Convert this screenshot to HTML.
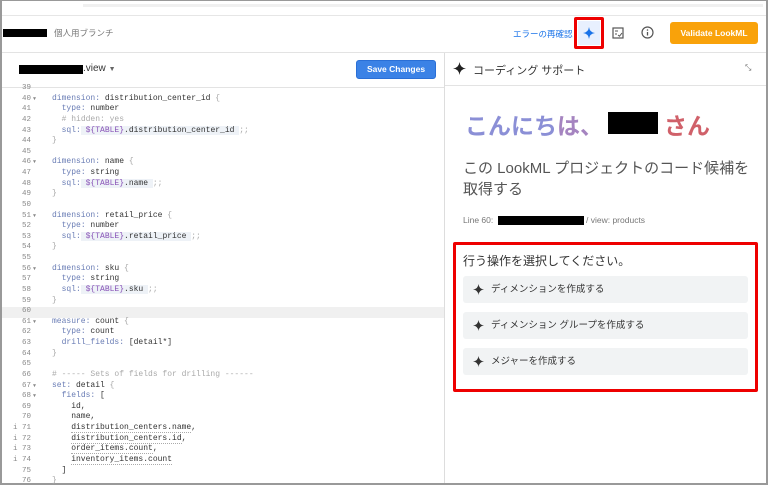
<!DOCTYPE html>
<html><head><meta charset="utf-8"><style>
*{margin:0;padding:0;box-sizing:border-box}
body{width:768px;height:485px;overflow:hidden;background:#fff;font-family:"Liberation Sans","Noto Sans CJK JP",sans-serif;position:relative}
.a{position:absolute}
.code{position:absolute;left:0;top:83px;width:444px;font-family:"Liberation Mono","DejaVu Sans Mono",monospace;font-size:8px;color:#333}
.ln{height:10.63px;line-height:10.63px;position:relative;white-space:pre}
.ln .n{position:absolute;left:0;width:31px;text-align:right;color:#888;font-size:7.5px}
.ln .f{position:absolute;left:33px;color:#888;font-size:5px}
.ln .t{position:absolute;left:52px}
.k{color:#6a7db5}.c{color:#aaa}.v{color:#8a55b8;background:#eef2f7}.s{background:#eef2f7}.u{border-bottom:1px dotted #aaa}
.btn{position:absolute;left:463px;width:285px;height:27px;background:#f1f3f4;border-radius:3px;font-size:9.5px;color:#333;line-height:27px;padding-left:28px}
.btn svg{position:absolute;left:10px;top:8px}
</style></head><body>
<div class="a" style="left:0;top:0;width:768px;height:485px;border:2px solid #999;border-top:1px solid #999"></div>
<div class="a" style="left:83px;top:4px;width:680px;height:3px;background:#f0f0f0"></div>
<div class="a" style="left:2px;top:15px;width:764px;height:1px;background:#e6e6e6"></div>
<div class="a" style="left:3px;top:29px;width:44px;height:8px;background:#000"></div>
<div class="a" style="left:54px;top:27px;font-size:8.5px;color:#777">個人用ブランチ</div>
<div class="a" style="left:513px;top:28px;font-size:8.5px;color:#1a73e8">エラーの再確認</div>
<div class="a" style="left:574px;top:17px;width:30px;height:32px;border:3px solid #e00;border-radius:2px"></div>
<div class="a" style="left:578px;top:21px;width:22px;height:24px;background:#e8f0fe"></div>
<svg class="a" style="left:583px;top:27px" width="12" height="12" viewBox="0 0 12 12"><path d="M6 0Q6.6 5.4 12 6Q6.6 6.6 6 12Q5.4 6.6 0 6Q5.4 5.4 6 0Z" fill="#1a73e8"/></svg>
<svg class="a" style="left:612px;top:27px" width="12" height="12" viewBox="0 0 12 12"><rect x="1" y="1" width="10" height="10" fill="none" stroke="#555" stroke-width="1.2"/><path d="M3 4h3M3 7h2M6 8l1.5 1.2L10 6" stroke="#555" fill="none"/></svg>
<svg class="a" style="left:641px;top:26px" width="13" height="13" viewBox="0 0 13 13"><circle cx="6.5" cy="6.5" r="5.5" fill="none" stroke="#555" stroke-width="1.2"/><path d="M6.5 6v3.5" stroke="#555" stroke-width="1.3"/><circle cx="6.5" cy="4" r=".8" fill="#555"/></svg>
<div class="a" style="left:670px;top:22px;width:88px;height:22px;background:#f9a20a;border-radius:3px;color:#fff;font-size:8.5px;font-weight:bold;text-align:center;line-height:22px">Validate LookML</div>
<div class="a" style="left:2px;top:52px;width:764px;height:1px;background:#e3e3e3"></div>
<div class="a" style="left:444px;top:53px;width:1px;height:430px;background:#ddd"></div>
<div class="a" style="left:2px;top:87px;width:442px;height:1px;background:#e3e3e3"></div>
<div class="a" style="left:19px;top:65px;width:64px;height:9px;background:#000"></div>
<div class="a" style="left:83px;top:63px;font-size:10px;color:#333">.view <span style="font-size:7px;color:#666">▼</span></div>
<div class="a" style="left:356px;top:60px;width:80px;height:19px;background:#3b82e6;border:1px solid #2a6fd6;border-radius:3px;color:#fff;font-size:8.5px;font-weight:bold;text-align:center;line-height:17px">Save Changes</div>
<div class="a" style="left:2px;top:307px;width:442px;height:10.6px;background:#f0f0f0"></div>
<div class="code">
<div class="ln"><span class="n">39</span></div>
<div class="ln"><span class="n">40</span><span class="f">▼</span><span class="t"><span class="k">dimension:</span> distribution_center_id <span class="c">{</span></span></div>
<div class="ln"><span class="n">41</span><span class="t">  <span class="k">type:</span> number</span></div>
<div class="ln"><span class="n">42</span><span class="t">  <span class="c"># hidden: yes</span></span></div>
<div class="ln"><span class="n">43</span><span class="t">  <span class="k">sql:</span><span class="s"> <span class="v">${TABLE}</span>.distribution_center_id </span><span class="c">;;</span></span></div>
<div class="ln"><span class="n">44</span><span class="t"><span class="c">}</span></span></div>
<div class="ln"><span class="n">45</span></div>
<div class="ln"><span class="n">46</span><span class="f">▼</span><span class="t"><span class="k">dimension:</span> name <span class="c">{</span></span></div>
<div class="ln"><span class="n">47</span><span class="t">  <span class="k">type:</span> string</span></div>
<div class="ln"><span class="n">48</span><span class="t">  <span class="k">sql:</span><span class="s"> <span class="v">${TABLE}</span>.name </span><span class="c">;;</span></span></div>
<div class="ln"><span class="n">49</span><span class="t"><span class="c">}</span></span></div>
<div class="ln"><span class="n">50</span></div>
<div class="ln"><span class="n">51</span><span class="f">▼</span><span class="t"><span class="k">dimension:</span> retail_price <span class="c">{</span></span></div>
<div class="ln"><span class="n">52</span><span class="t">  <span class="k">type:</span> number</span></div>
<div class="ln"><span class="n">53</span><span class="t">  <span class="k">sql:</span><span class="s"> <span class="v">${TABLE}</span>.retail_price </span><span class="c">;;</span></span></div>
<div class="ln"><span class="n">54</span><span class="t"><span class="c">}</span></span></div>
<div class="ln"><span class="n">55</span></div>
<div class="ln"><span class="n">56</span><span class="f">▼</span><span class="t"><span class="k">dimension:</span> sku <span class="c">{</span></span></div>
<div class="ln"><span class="n">57</span><span class="t">  <span class="k">type:</span> string</span></div>
<div class="ln"><span class="n">58</span><span class="t">  <span class="k">sql:</span><span class="s"> <span class="v">${TABLE}</span>.sku </span><span class="c">;;</span></span></div>
<div class="ln"><span class="n">59</span><span class="t"><span class="c">}</span></span></div>
<div class="ln"><span class="n">60</span></div>
<div class="ln"><span class="n">61</span><span class="f">▼</span><span class="t"><span class="k">measure:</span> count <span class="c">{</span></span></div>
<div class="ln"><span class="n">62</span><span class="t">  <span class="k">type:</span> count</span></div>
<div class="ln"><span class="n">63</span><span class="t">  <span class="k">drill_fields:</span> [detail*]</span></div>
<div class="ln"><span class="n">64</span><span class="t"><span class="c">}</span></span></div>
<div class="ln"><span class="n">65</span></div>
<div class="ln"><span class="n">66</span><span class="t"><span class="c"># ----- Sets of fields for drilling ------</span></span></div>
<div class="ln"><span class="n">67</span><span class="f">▼</span><span class="t"><span class="k">set:</span> detail <span class="c">{</span></span></div>
<div class="ln"><span class="n">68</span><span class="f">▼</span><span class="t">  <span class="k">fields:</span> [</span></div>
<div class="ln"><span class="n">69</span><span class="t">    id,</span></div>
<div class="ln"><span class="n">70</span><span class="t">    name,</span></div>
<div class="ln"><span class="n">i 71</span><span class="t">    <span class="u">distribution_centers.name</span>,</span></div>
<div class="ln"><span class="n">i 72</span><span class="t">    <span class="u">distribution_centers.id</span>,</span></div>
<div class="ln"><span class="n">i 73</span><span class="t">    <span class="u">order_items.count</span>,</span></div>
<div class="ln"><span class="n">i 74</span><span class="t">    <span class="u">inventory_items.count</span></span></div>
<div class="ln"><span class="n">75</span><span class="t">  ]</span></div>
<div class="ln"><span class="n">76</span><span class="t"><span class="c">}</span></span></div>
</div>
<svg class="a" style="left:453px;top:62px" width="13" height="13" viewBox="0 0 12 12"><path d="M6 0Q6.6 5.4 12 6Q6.6 6.6 6 12Q5.4 6.6 0 6Q5.4 5.4 6 0Z" fill="#222"/></svg>
<div class="a" style="left:473px;top:62px;font-size:11px;color:#333">コーディング サポート</div>
<div class="a" style="left:745px;top:63px;font-size:8px;color:#666">⤡</div>
<div class="a" style="left:445px;top:85px;width:321px;height:1px;background:#e3e3e3"></div>
<div class="a" style="left:465px;top:107px;font-size:23px;font-weight:bold;white-space:nowrap"><span style="color:#8b8fd6">こんにち</span><span style="color:#a584c0">は、</span></div>
<div class="a" style="left:608px;top:112px;width:50px;height:22px;background:#000"></div>
<div class="a" style="left:664px;top:107px;font-size:23px;font-weight:bold;color:#d0616a">さん</div>
<div class="a" style="left:463px;top:158px;font-size:15px;color:#555;line-height:21px;width:290px">この LookML プロジェクトのコード候補を取得する</div>
<div class="a" style="left:463px;top:215px;font-size:8.5px;color:#777">Line 60:</div>
<div class="a" style="left:498px;top:216px;width:86px;height:9px;background:#000"></div>
<div class="a" style="left:586px;top:215px;font-size:8.5px;color:#777">/ view: products</div>
<div class="a" style="left:453px;top:242px;width:305px;height:150px;border:3px solid #e00;border-radius:2px"></div>
<div class="a" style="left:463px;top:252px;font-size:12px;color:#333">行う操作を選択してください。</div>
<div class="btn" style="top:276px"><svg width="11" height="11" viewBox="0 0 12 12"><path d="M6 0Q6.6 5.4 12 6Q6.6 6.6 6 12Q5.4 6.6 0 6Q5.4 5.4 6 0Z" fill="#333"/></svg>ディメンションを作成する</div>
<div class="btn" style="top:312px"><svg width="11" height="11" viewBox="0 0 12 12"><path d="M6 0Q6.6 5.4 12 6Q6.6 6.6 6 12Q5.4 6.6 0 6Q5.4 5.4 6 0Z" fill="#333"/></svg>ディメンション グループを作成する</div>
<div class="btn" style="top:348px"><svg width="11" height="11" viewBox="0 0 12 12"><path d="M6 0Q6.6 5.4 12 6Q6.6 6.6 6 12Q5.4 6.6 0 6Q5.4 5.4 6 0Z" fill="#333"/></svg>メジャーを作成する</div>
</body></html>
